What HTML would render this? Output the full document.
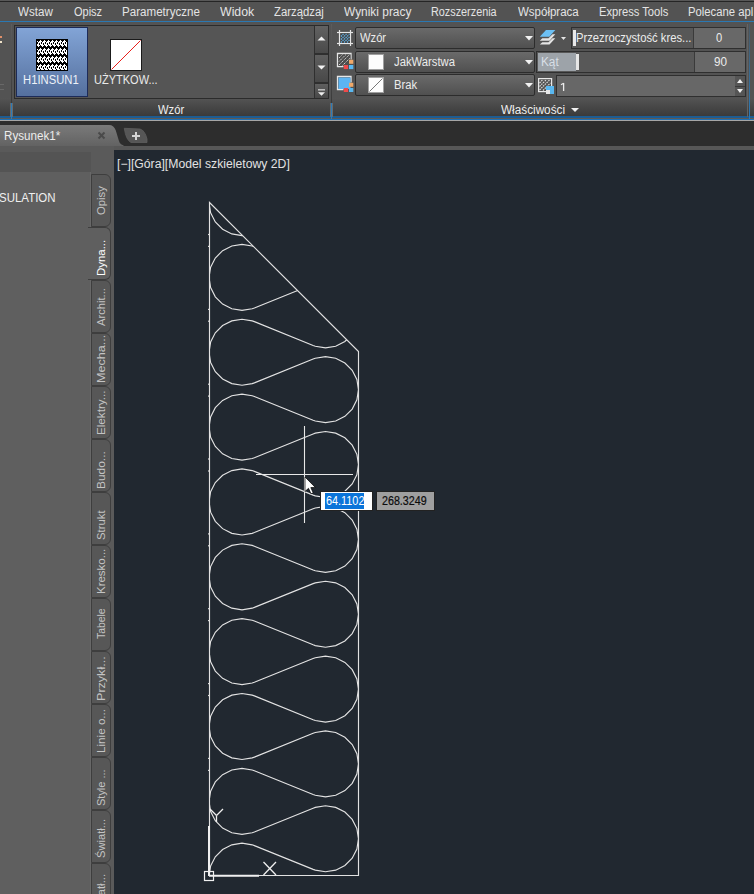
<!DOCTYPE html>
<html><head><meta charset="utf-8">
<style>
*{box-sizing:border-box}
html,body{margin:0;padding:0}
body{width:754px;height:894px;overflow:hidden;position:relative;background:#2d2d2d;font-family:"Liberation Sans",sans-serif;}
.a{position:absolute}
.t{position:absolute;white-space:nowrap;line-height:12px;font-size:12px;transform-origin:0 0}
.vt{position:absolute;white-space:nowrap;font-size:11.5px;line-height:11.5px;transform-origin:0 0;transform:rotate(-90deg)}
.combo{position:absolute;background:linear-gradient(#6a6a6a,#505050);border:1px solid #2c2c2c;border-radius:2px}
</style></head><body>
<!-- menu bar -->
<div class="a" style="left:0;top:0;width:754px;height:1px;background:#585858"></div>
<div class="a" style="left:0;top:1px;width:754px;height:1px;background:#252525"></div>
<div class="a" style="left:0;top:2px;width:754px;height:19px;background:#535353"></div>
<div class="a" style="left:0;top:21px;width:754px;height:1px;background:#2a78b2"></div>

<!-- ribbon -->
<div class="a" style="left:0;top:22px;width:754px;height:77px;background:#535353"></div>
<div class="a" style="left:0;top:98px;width:754px;height:18px;background:linear-gradient(#545454,#3a3a3a)"></div>
<div class="a" style="left:0;top:116px;width:754px;height:2px;background:#1d5c92"></div>
<div class="a" style="left:0;top:118px;width:754px;height:1px;background:#5e5954"></div>
<div class="a" style="left:0;top:119px;width:754px;height:1px;background:#1e70b4"></div>
<div class="a" style="left:0;top:120px;width:754px;height:1px;background:#a6a6a6"></div>
<!-- separators -->
<div class="a" style="left:11px;top:24px;width:1px;height:79px;background:linear-gradient(#5c5c5c,#3a3a3a)"></div>
<div class="a" style="left:11px;top:103px;width:1px;height:16px;background:#2a7ab8"></div>
<div class="a" style="left:10px;top:103px;width:1px;height:14px;background:#6a6a6a"></div>
<div class="a" style="left:12px;top:103px;width:1px;height:14px;background:#6a6a6a"></div>
<div class="a" style="left:331px;top:24px;width:1px;height:79px;background:linear-gradient(#5c5c5c,#3a3a3a)"></div>
<div class="a" style="left:331px;top:103px;width:1px;height:16px;background:#2a7ab8"></div>
<div class="a" style="left:330px;top:103px;width:1px;height:14px;background:#6a6a6a"></div>
<div class="a" style="left:332px;top:103px;width:1px;height:14px;background:#6a6a6a"></div>
<div class="a" style="left:749px;top:24px;width:1px;height:95px;background:linear-gradient(#4a5a66,#2a7ab8)"></div>
<div class="a" style="left:747px;top:24px;width:1px;height:93px;background:#646464"></div>
<div class="a" style="left:0;top:36px;width:1.5px;height:2px;background:#e0906a"></div><div class="a" style="left:0;top:41px;width:1.5px;height:1.5px;background:#efe2c8"></div>
<div class="a" style="left:0;top:84px;width:3.5px;height:6px;border-top:1px solid #686868;border-bottom:1px solid #686868"></div>

<!-- gallery -->
<div class="a" style="left:14px;top:25px;width:315px;height:74px;background:#555555;border:1px solid #2b2b2b"></div>
<div class="a" style="left:16px;top:27px;width:72px;height:70px;background:linear-gradient(#82a4d6,#55709e);border:1px solid #1d2b58"></div>
<svg class="a" style="left:36px;top:39px" width="32" height="32">
<rect width="32" height="32" fill="#000"/>
<defs><pattern id="ht" x="1" y="1" width="4" height="8" patternUnits="userSpaceOnUse"><g fill="#fff"><rect x="3" y="0" width="1" height="1"/><rect x="0" y="1" width="1" height="1"/><rect x="2" y="1" width="1" height="1"/><rect x="3" y="1" width="1" height="1"/><rect x="1" y="2" width="1" height="1"/><rect x="2" y="2" width="1" height="1"/><rect x="3" y="2" width="1" height="1"/><rect x="1" y="3" width="1" height="1"/><rect x="3" y="3" width="1" height="1"/><rect x="0" y="4" width="1" height="1"/><rect x="1" y="4" width="1" height="1"/><rect x="3" y="4" width="1" height="1"/><rect x="0" y="5" width="1" height="1"/><rect x="1" y="5" width="1" height="1"/><rect x="2" y="5" width="1" height="1"/><rect x="1" y="6" width="1" height="1"/></g></pattern></defs>
<rect x="1" y="1" width="30" height="30" fill="url(#ht)"/>
</svg>
<div class="a" style="left:110px;top:39px;width:32px;height:32px;background:#fff;border:1px solid #1a1a1a"></div>
<svg class="a" style="left:110px;top:39px" width="32" height="32"><line x1="1.5" y1="30.5" x2="30.5" y2="1.5" stroke="#e8201c" stroke-width="1"/></svg>
<!-- scroll buttons -->
<div class="a" style="left:314px;top:26px;width:14px;height:72px;background:#2f2f2f"></div>
<div class="a" style="left:315px;top:26px;width:13px;height:27px;background:linear-gradient(#626262,#4a4a4a)"></div>
<div class="a" style="left:315px;top:55px;width:13px;height:27px;background:linear-gradient(#5f5f5f,#484848)"></div>
<div class="a" style="left:315px;top:84px;width:13px;height:14px;background:linear-gradient(#5f5f5f,#484848)"></div>
<svg class="a" style="left:315px;top:26px" width="13" height="72">
<polygon points="2.5,14.5 10.5,14.5 6.5,10.5" fill="#f2f2f2"/>
<polygon points="2.5,39.5 10.5,39.5 6.5,43.5" fill="#f2f2f2"/>
<rect x="3" y="63" width="7" height="1.6" fill="#b8b8b8"/>
<polygon points="3,66.3 10,66.3 6.5,69.8" fill="#eeeeee"/>
</svg>

<!-- properties panel icons -->
<svg class="a" style="left:334px;top:26px" width="24" height="72">
<g stroke="#e6e6e6" stroke-width="1.2" fill="none">
<line x1="3" y1="6.5" x2="19" y2="6.5"/><line x1="3" y1="17.5" x2="19" y2="17.5"/>
<line x1="5.5" y1="4" x2="5.5" y2="20"/><line x1="16.5" y1="4" x2="16.5" y2="20"/>
</g>
<rect x="6.5" y="7.5" width="9.5" height="9.5" fill="#474747"/>
<g stroke="#5fb8f4" stroke-width="1.1" stroke-dasharray="1.4 0.8"><line x1="7" y1="10.5" x2="9.5" y2="8"/><line x1="7" y1="13.5" x2="12.5" y2="8"/><line x1="7" y1="16.5" x2="15.5" y2="8"/><line x1="10" y1="16.5" x2="15.5" y2="11"/><line x1="13" y1="16.5" x2="15.5" y2="14"/></g>
<!-- row2 -->
<path d="M17 33.5 V27.5 H3.5 V40.5 H9.5" stroke="#e6e6e6" stroke-width="1.3" fill="none"/>
<rect x="4.5" y="28.5" width="12" height="11.5" fill="#4e4e4e"/>
<g stroke="#d8d8d8" stroke-width="1" stroke-dasharray="1.3 0.9"><line x1="5" y1="32" x2="8.5" y2="28.5"/><line x1="5" y1="35.5" x2="12" y2="28.5"/><line x1="5" y1="39" x2="15.5" y2="28.5"/><line x1="8.5" y1="39.5" x2="16" y2="32"/></g>
<rect x="15" y="33.8" width="4.3" height="4" fill="#f0a868"/>
<rect x="9.8" y="39" width="4.3" height="4.1" fill="#ee4a4a"/>
<rect x="15" y="39" width="4.3" height="4.1" fill="#5ab8f0"/>
<!-- row3 -->
<path d="M17 56.5 V50.5 H3.5 V63.5 H9.5" stroke="#e6e6e6" stroke-width="1.3" fill="none"/>
<rect x="4.5" y="51.5" width="12" height="11.5" fill="#5cb4f2"/>
<rect x="15" y="56.8" width="4.3" height="4" fill="#f0a868"/>
<rect x="9.8" y="62" width="4.3" height="4" fill="#ee4a4a"/>
<rect x="15" y="62" width="4.3" height="4" fill="#5ab8f0"/>
</svg>
<div class="combo" style="left:355px;top:27px;width:180px;height:22px"></div>
<div class="combo" style="left:355px;top:51px;width:180px;height:22px"></div>
<div class="combo" style="left:355px;top:74px;width:180px;height:22px"></div>
<svg class="a" style="left:520px;top:26px" width="60" height="72">
<polygon points="5,10 13,10 9,14.5" fill="#f2f2f2"/>
<polygon points="5,34 13,34 9,38.5" fill="#f2f2f2"/>
<polygon points="5,57 13,57 9,61.5" fill="#f2f2f2"/>
<!-- layers icon -->
<polygon points="19.8,10.8 29.3,10.8 35.3,4 26,4" fill="#6cc0f4"/>
<polygon points="19.8,14.8 29.5,14.8 35.3,8.3 32.5,8.3 28.5,12.3 22.3,12.3" fill="#e4e4e4"/>
<polygon points="19.8,18.6 29.5,18.6 35.3,12.2 32.5,12.2 28.5,16.2 22.3,16.2" fill="#e4e4e4"/>
<polygon points="41,11 46,11 43.5,14" fill="#e6e6e6"/>
</svg>
<div class="a" style="left:368px;top:54px;width:16px;height:16px;background:#fdfdfd;border:1px solid #a0a0a0"></div>
<div class="a" style="left:368px;top:77px;width:16px;height:16px;background:#fdfdfd;border:1px solid #a0a0a0"></div>
<svg class="a" style="left:368px;top:77px" width="16" height="16"><line x1="1.5" y1="14.5" x2="14.5" y2="1.5" stroke="#777" stroke-width="1"/></svg>

<div class="a" style="left:571px;top:27px;width:175px;height:22px;background:#575757;border:1px solid #2f2f2f"></div>
<div class="a" style="left:693px;top:28px;width:52px;height:20px;background:#686868;border-left:1px solid #3a3a3a"></div>
<div class="a" style="left:573px;top:30px;width:3px;height:16px;background:#e8e8e8"></div>
<div class="a" style="left:536px;top:51px;width:210px;height:22px;background:#585858;border:1px solid #2f2f2f"></div>
<div class="a" style="left:538px;top:53px;width:38px;height:18px;background:#9da3a9"></div>
<div class="a" style="left:576px;top:54px;width:3px;height:16px;background:#e6e6e6"></div>
<div class="a" style="left:694px;top:52px;width:51px;height:20px;background:#686868;border-left:1px solid #3a3a3a"></div>
<svg class="a" style="left:537px;top:77px" width="18" height="18">
<rect x="1.6" y="1.6" width="13" height="13" fill="#555" stroke="#e8e8e8" stroke-width="1.2"/>
<g stroke="#e2e2e2" stroke-width="1.1" stroke-dasharray="1.6 0.9"><line x1="2.5" y1="6" x2="6" y2="2.5"/><line x1="2.5" y1="9.5" x2="9.5" y2="2.5"/><line x1="2.5" y1="13" x2="13" y2="2.5"/><line x1="6" y1="13.5" x2="13.5" y2="6"/></g>
<rect x="9" y="9" width="8" height="8" fill="#5ab8f0"/>
<rect x="9" y="13" width="4" height="4" fill="#e8e8e8"/>
</svg>
<div class="a" style="left:556px;top:75px;width:190px;height:22px;background:#676767;border:1px solid #2f2f2f"></div>
<div class="a" style="left:735px;top:76px;width:10px;height:20px;background:#3a3a3a"></div>
<div class="a" style="left:735px;top:76px;width:10px;height:9.5px;background:#555"></div>
<div class="a" style="left:735px;top:86.5px;width:10px;height:9.5px;background:#555"></div>
<svg class="a" style="left:735px;top:76px" width="10" height="20">
<polygon points="2,7 8,7 5,3" fill="#f0f0f0"/><polygon points="2,13 8,13 5,17" fill="#f0f0f0"/>
</svg>
<svg class="a" style="left:565px;top:104px" width="16" height="10"><polygon points="6,4 14,4 10,8" fill="#f0f0f0"/></svg>

<!-- tab bar -->
<div class="a" style="left:0;top:121px;width:754px;height:26px;background:#2d2d2d"></div>
<svg class="a" style="left:0;top:121px" width="160" height="29">
<defs><linearGradient id="tg" x1="0" y1="0" x2="0" y2="1"><stop offset="0" stop-color="#7a7a7a"/><stop offset="1" stop-color="#5e5e5e"/></linearGradient></defs>
<path d="M0 3.9 H109 Q114 3.9 115.8 9.5 L118.8 19.5 Q120 23.8 123.5 24.2 V29 H0 Z" fill="url(#tg)"/>
<path d="M124.3 7.3 L140 8 Q145 9.5 147 18 L147 21.5 L131 21.5 Q126 19 124.3 7.3 Z" fill="#565656" stroke="#5e5e5e" stroke-width="0.8"/>
</svg>
<svg class="a" style="left:97px;top:131px" width="10" height="10"><g stroke="#4a4a4a" stroke-width="1.9"><line x1="1.5" y1="1.5" x2="7.5" y2="7.5"/><line x1="7.5" y1="1.5" x2="1.5" y2="7.5"/></g></svg>
<svg class="a" style="left:129px;top:129px" width="14" height="14"><g stroke="#d4d4d4" stroke-width="2"><line x1="7" y1="3" x2="7" y2="11"/><line x1="3" y1="7" x2="11" y2="7"/></g></svg>

<!-- palette -->
<div class="a" style="left:0;top:146px;width:754px;height:4px;background:#575757"></div>
<div class="a" style="left:0;top:146px;width:114px;height:748px;background:#5a5a5a"></div>
<div class="a" style="left:0;top:152px;width:91px;height:20px;background:#545454"></div>
<div class="a" style="left:0;top:172px;width:90px;height:722px;background:#5f5f5f"></div>
<div class="a" style="left:90px;top:172px;width:1px;height:722px;background:#686868"></div>
<div class="a" style="left:91px;top:174px;width:20px;height:53px;background:#575757;border:1px solid #3e3e3e;border-radius:0 6px 6px 0"></div>
<div class="a" style="left:88px;top:227px;width:23px;height:53px;background:#5f5f5f;border:1px solid #3e3e3e;border-left:none;border-radius:0 6px 6px 0"></div>
<div class="a" style="left:91px;top:280px;width:20px;height:53px;background:#575757;border:1px solid #3e3e3e;border-radius:0 6px 6px 0"></div>
<div class="a" style="left:91px;top:333px;width:20px;height:53px;background:#575757;border:1px solid #3e3e3e;border-radius:0 6px 6px 0"></div>
<div class="a" style="left:91px;top:386px;width:20px;height:53px;background:#575757;border:1px solid #3e3e3e;border-radius:0 6px 6px 0"></div>
<div class="a" style="left:91px;top:439px;width:20px;height:53px;background:#575757;border:1px solid #3e3e3e;border-radius:0 6px 6px 0"></div>
<div class="a" style="left:91px;top:492px;width:20px;height:53px;background:#575757;border:1px solid #3e3e3e;border-radius:0 6px 6px 0"></div>
<div class="a" style="left:91px;top:545px;width:20px;height:53px;background:#575757;border:1px solid #3e3e3e;border-radius:0 6px 6px 0"></div>
<div class="a" style="left:91px;top:598px;width:20px;height:53px;background:#575757;border:1px solid #3e3e3e;border-radius:0 6px 6px 0"></div>
<div class="a" style="left:91px;top:651px;width:20px;height:53px;background:#575757;border:1px solid #3e3e3e;border-radius:0 6px 6px 0"></div>
<div class="a" style="left:91px;top:704px;width:20px;height:53px;background:#575757;border:1px solid #3e3e3e;border-radius:0 6px 6px 0"></div>
<div class="a" style="left:91px;top:757px;width:20px;height:53px;background:#575757;border:1px solid #3e3e3e;border-radius:0 6px 6px 0"></div>
<div class="a" style="left:91px;top:810px;width:20px;height:53px;background:#575757;border:1px solid #3e3e3e;border-radius:0 6px 6px 0"></div>
<div class="a" style="left:91px;top:863px;width:20px;height:53px;background:#575757;border:1px solid #3e3e3e;border-radius:0 6px 6px 0"></div>
<div class="vt" style="left:96.3px;top:214.7px;color:#c4c4c4;transform:rotate(-90deg) scaleX(0.983)">Opisy</div>
<div class="vt" style="left:96.3px;top:276.4px;color:#ffffff;transform:rotate(-90deg) scaleX(0.994)">Dyna...</div>
<div class="vt" style="left:96.3px;top:325.6px;color:#c4c4c4;transform:rotate(-90deg) scaleX(0.971)">Archit...</div>
<div class="vt" style="left:96.3px;top:382.5px;color:#c4c4c4;transform:rotate(-90deg) scaleX(1.093)">Mecha...</div>
<div class="vt" style="left:96.3px;top:435.1px;color:#c4c4c4;transform:rotate(-90deg) scaleX(1.014)">Elektry...</div>
<div class="vt" style="left:96.3px;top:489.0px;color:#c4c4c4;transform:rotate(-90deg) scaleX(1.037)">Budo...</div>
<div class="vt" style="left:96.3px;top:539.5px;color:#c4c4c4;transform:rotate(-90deg) scaleX(0.983)">Strukt</div>
<div class="vt" style="left:96.3px;top:594.4px;color:#c4c4c4;transform:rotate(-90deg) scaleX(0.998)">Kresko...</div>
<div class="vt" style="left:96.3px;top:638.6px;color:#c4c4c4;transform:rotate(-90deg) scaleX(0.903)">Tabele</div>
<div class="vt" style="left:96.3px;top:700.5px;color:#c4c4c4;transform:rotate(-90deg) scaleX(1.092)">Przykł...</div>
<div class="vt" style="left:96.3px;top:753.1px;color:#c4c4c4;transform:rotate(-90deg) scaleX(1.014)">Linie o...</div>
<div class="vt" style="left:96.3px;top:806.0px;color:#c4c4c4;transform:rotate(-90deg) scaleX(0.955)">Style ...</div>
<div class="vt" style="left:96.3px;top:857.8px;color:#c4c4c4;transform:rotate(-90deg) scaleX(0.970)">Światł...</div>
<div class="vt" style="left:96.3px;top:913.5px;color:#c4c4c4;transform:rotate(-90deg) scaleX(1.000)">Światł...</div>

<!-- viewport -->
<div class="a" style="left:114px;top:150px;width:640px;height:744px;background:#212830"></div>
<svg class="a" style="left:0;top:0" width="754" height="894">
<defs><clipPath id="cp"><polygon points="209.5,202.5 358.5,351.5 358.5,875.5 209.5,875.5"/></clipPath></defs>
<g fill="none" stroke="#e2e2e2" stroke-width="1.15">
<path clip-path="url(#cp)" d="M254.37 171.96 L252.20 171.17 L242.00 169.55 L231.80 171.17 L222.60 175.85 L215.30 183.15 L210.62 192.35 L209.00 202.55 L210.62 212.75 L215.30 221.95 L222.60 229.25 L231.80 233.93 L242.00 235.55 L252.20 233.93 L254.37 233.14 L313.13 209.38 L315.30 208.59 L325.50 206.98 L335.70 208.59 L344.90 213.28 L352.20 220.58 L356.88 229.78 L358.50 239.98 L356.88 250.17 L352.20 259.37 L344.90 266.67 L335.70 271.36 L325.50 272.98 L315.30 271.36 L313.13 270.57 L254.37 246.81 L252.20 246.02 L242.00 244.40 L231.80 246.02 L222.60 250.70 L215.30 258.00 L210.62 267.20 L209.00 277.40 L210.62 287.60 L215.30 296.80 L222.60 304.10 L231.80 308.78 L242.00 310.40 L252.20 308.78 L254.37 307.99 L313.13 284.23 L315.30 283.44 L325.50 281.83 L335.70 283.44 L344.90 288.13 L352.20 295.43 L356.88 304.63 L358.50 314.83 L356.88 325.02 L352.20 334.22 L344.90 341.52 L335.70 346.21 L325.50 347.83 L315.30 346.21 L313.13 345.42 L254.37 321.66 L252.20 320.87 L242.00 319.25 L231.80 320.87 L222.60 325.55 L215.30 332.85 L210.62 342.05 L209.00 352.25 L210.62 362.45 L215.30 371.65 L222.60 378.95 L231.80 383.63 L242.00 385.25 L252.20 383.63 L254.37 382.84 L313.13 359.08 L315.30 358.29 L325.50 356.68 L335.70 358.29 L344.90 362.98 L352.20 370.28 L356.88 379.48 L358.50 389.68 L356.88 399.87 L352.20 409.07 L344.90 416.37 L335.70 421.06 L325.50 422.68 L315.30 421.06 L313.13 420.27 L254.37 396.51 L252.20 395.72 L242.00 394.10 L231.80 395.72 L222.60 400.40 L215.30 407.70 L210.62 416.90 L209.00 427.10 L210.62 437.30 L215.30 446.50 L222.60 453.80 L231.80 458.48 L242.00 460.10 L252.20 458.48 L254.37 457.69 L313.13 433.93 L315.30 433.14 L325.50 431.52 L335.70 433.14 L344.90 437.83 L352.20 445.13 L356.88 454.33 L358.50 464.52 L356.88 474.72 L352.20 483.92 L344.90 491.22 L335.70 495.91 L325.50 497.52 L315.30 495.91 L313.13 495.12 L254.37 471.36 L252.20 470.57 L242.00 468.95 L231.80 470.57 L222.60 475.25 L215.30 482.55 L210.62 491.75 L209.00 501.95 L210.62 512.15 L215.30 521.35 L222.60 528.65 L231.80 533.33 L242.00 534.95 L252.20 533.33 L254.37 532.54 L313.13 508.78 L315.30 507.99 L325.50 506.38 L335.70 507.99 L344.90 512.68 L352.20 519.98 L356.88 529.18 L358.50 539.38 L356.88 549.57 L352.20 558.77 L344.90 566.07 L335.70 570.76 L325.50 572.38 L315.30 570.76 L313.13 569.97 L254.37 546.21 L252.20 545.42 L242.00 543.80 L231.80 545.42 L222.60 550.10 L215.30 557.40 L210.62 566.60 L209.00 576.80 L210.62 587.00 L215.30 596.20 L222.60 603.50 L231.80 608.18 L242.00 609.80 L252.20 608.18 L254.37 607.39 L313.13 583.63 L315.30 582.84 L325.50 581.23 L335.70 582.84 L344.90 587.53 L352.20 594.83 L356.88 604.03 L358.50 614.23 L356.88 624.42 L352.20 633.62 L344.90 640.92 L335.70 645.61 L325.50 647.23 L315.30 645.61 L313.13 644.82 L254.37 621.06 L252.20 620.27 L242.00 618.65 L231.80 620.27 L222.60 624.95 L215.30 632.25 L210.62 641.45 L209.00 651.65 L210.62 661.85 L215.30 671.05 L222.60 678.35 L231.80 683.03 L242.00 684.65 L252.20 683.03 L254.37 682.24 L313.13 658.48 L315.30 657.69 L325.50 656.08 L335.70 657.69 L344.90 662.38 L352.20 669.68 L356.88 678.88 L358.50 689.08 L356.88 699.27 L352.20 708.47 L344.90 715.77 L335.70 720.46 L325.50 722.08 L315.30 720.46 L313.13 719.67 L254.37 695.91 L252.20 695.12 L242.00 693.50 L231.80 695.12 L222.60 699.80 L215.30 707.10 L210.62 716.30 L209.00 726.50 L210.62 736.70 L215.30 745.90 L222.60 753.20 L231.80 757.88 L242.00 759.50 L252.20 757.88 L254.37 757.09 L313.13 733.33 L315.30 732.54 L325.50 730.92 L335.70 732.54 L344.90 737.23 L352.20 744.53 L356.88 753.73 L358.50 763.92 L356.88 774.12 L352.20 783.32 L344.90 790.62 L335.70 795.31 L325.50 796.92 L315.30 795.31 L313.13 794.52 L254.37 770.76 L252.20 769.97 L242.00 768.35 L231.80 769.97 L222.60 774.65 L215.30 781.95 L210.62 791.15 L209.00 801.35 L210.62 811.55 L215.30 820.75 L222.60 828.05 L231.80 832.73 L242.00 834.35 L252.20 832.73 L254.37 831.94 L313.13 808.18 L315.30 807.39 L325.50 805.77 L335.70 807.39 L344.90 812.08 L352.20 819.38 L356.88 828.58 L358.50 838.77 L356.88 848.97 L352.20 858.17 L344.90 865.47 L335.70 870.16 L325.50 871.77 L315.30 870.16 L313.13 869.37 L254.37 845.61 L252.20 844.82 L242.00 843.20 L231.80 844.82 L222.60 849.50 L215.30 856.80 L210.62 866.00 L209.00 876.20 L210.62 886.40 L215.30 895.60 L222.60 902.90 L231.80 907.58 L242.00 909.20 L252.20 907.58 L254.37 906.79 L313.13 883.03 L315.30 882.24 L325.50 880.62 L335.70 882.24 L344.90 886.93 L352.20 894.23 L356.88 903.43 L358.50 913.62 L356.88 923.82 L352.20 933.02 L344.90 940.32 L335.70 945.01 L325.50 946.62 L315.30 945.01 L313.13 944.22"/>
<polygon points="209.5,202.5 358.5,351.5 358.5,875.5 209.5,875.5"/>
</g>
<rect x="208" y="233.9" width="1" height="1.2" fill="#d8d8d8"/><rect x="208" y="245.8" width="1" height="1.2" fill="#d8d8d8"/><rect x="208" y="308.8" width="1" height="1.2" fill="#d8d8d8"/><rect x="208" y="320.6" width="1" height="1.2" fill="#d8d8d8"/><rect x="208" y="383.6" width="1" height="1.2" fill="#d8d8d8"/><rect x="208" y="395.5" width="1" height="1.2" fill="#d8d8d8"/><rect x="208" y="458.4" width="1" height="1.2" fill="#d8d8d8"/><rect x="208" y="470.4" width="1" height="1.2" fill="#d8d8d8"/><rect x="208" y="533.3" width="1" height="1.2" fill="#d8d8d8"/><rect x="208" y="545.2" width="1" height="1.2" fill="#d8d8d8"/><rect x="208" y="608.1" width="1" height="1.2" fill="#d8d8d8"/><rect x="208" y="620.0" width="1" height="1.2" fill="#d8d8d8"/><rect x="208" y="683.0" width="1" height="1.2" fill="#d8d8d8"/><rect x="208" y="694.9" width="1" height="1.2" fill="#d8d8d8"/><rect x="208" y="757.8" width="1" height="1.2" fill="#d8d8d8"/><rect x="208" y="769.8" width="1" height="1.2" fill="#d8d8d8"/><rect x="208" y="832.7" width="1" height="1.2" fill="#d8d8d8"/><rect x="208" y="844.6" width="1" height="1.2" fill="#d8d8d8"/>
<!-- UCS icon -->
<g stroke="#f0f0f0" fill="none">
<line x1="209" y1="826" x2="209" y2="876" stroke-width="2"/>
<line x1="209" y1="875.8" x2="259" y2="875.8" stroke-width="2"/>
<rect x="204.5" y="871.5" width="9" height="9" stroke-width="1.2"/>
<g stroke-width="1.3"><line x1="263.5" y1="862" x2="276" y2="875"/><line x1="276" y1="862" x2="263.5" y2="875"/>
<line x1="210" y1="809" x2="216.5" y2="815.5"/><line x1="223" y1="809" x2="216.5" y2="815.5"/><line x1="216.5" y1="815.5" x2="216.5" y2="822"/></g>
</g>
<!-- crosshair -->
<g stroke="#e8e8e8" stroke-width="1.1">
<line x1="304.5" y1="426" x2="304.5" y2="523"/>
<line x1="256" y1="474.5" x2="353" y2="474.5"/>
</g>
<path d="M305 477 L305 491.5 L308.5 488.3 L311 493.8 L313.2 492.8 L310.8 487.6 L315.3 487.4 Z" fill="#fff" stroke="#000" stroke-width="0.7"/>
</svg>
<div class="a" style="left:320px;top:491px;width:53px;height:20px;background:#fff;border:1px solid #222"></div>
<div class="a" style="left:325px;top:493px;width:39px;height:16px;background:#0a74d9"></div>
<div class="a" style="left:376px;top:491px;width:59px;height:20px;background:#9f9f9f;border:1px solid #222"></div>
<svg class="a" style="left:558px;top:80px" width="10" height="14"><path d="M5.6 3 V11" stroke="#ececec" stroke-width="1.3"/><path d="M5.6 3.2 L3 4.8" stroke="#ececec" stroke-width="1.1"/></svg>
<div class="t" style="left:18.20px;top:6.0px;color:#e4e4e4;transform:scaleX(0.9667)">Wstaw</div>
<div class="t" style="left:73.60px;top:6.0px;color:#e4e4e4;transform:scaleX(0.9161)">Opisz</div>
<div class="t" style="left:121.73px;top:6.0px;color:#e4e4e4;transform:scaleX(0.9662)">Parametryczne</div>
<div class="t" style="left:220.10px;top:6.0px;color:#e4e4e4;transform:scaleX(1.0273)">Widok</div>
<div class="t" style="left:273.90px;top:6.0px;color:#e4e4e4;transform:scaleX(0.9442)">Zarządzaj</div>
<div class="t" style="left:343.50px;top:6.0px;color:#e4e4e4;transform:scaleX(0.9926)">Wyniki pracy</div>
<div class="t" style="left:430.80px;top:6.0px;color:#e4e4e4;transform:scaleX(0.9028)">Rozszerzenia</div>
<div class="t" style="left:517.50px;top:6.0px;color:#e4e4e4;transform:scaleX(0.9578)">Współpraca</div>
<div class="t" style="left:598.77px;top:6.0px;color:#e4e4e4;transform:scaleX(0.9315)">Express Tools</div>
<div class="t" style="left:687.66px;top:6.0px;color:#e4e4e4;transform:scaleX(0.9412)">Polecane apl</div>
<div class="t" style="left:23.46px;top:74.2px;color:#eef2f8;transform:scaleX(0.9379)">H1INSUN1</div>
<div class="t" style="left:94.08px;top:74.2px;color:#eaeaea;transform:scaleX(0.9176)">UŻYTKOW...</div>
<div class="t" style="left:158.30px;top:104.0px;color:#efefef;transform:scaleX(0.9357)">Wzór</div>
<div class="t" style="left:501.30px;top:104.0px;color:#efefef;transform:scaleX(0.9800)">Właściwości</div>
<div class="t" style="left:359.50px;top:32.2px;color:#ececec;transform:scaleX(0.9321)">Wzór</div>
<div class="t" style="left:394.00px;top:56.0px;color:#ececec;transform:scaleX(0.9385)">JakWarstwa</div>
<div class="t" style="left:393.56px;top:79.0px;color:#ececec;transform:scaleX(0.9375)">Brak</div>
<div class="t" style="left:576.46px;top:32.0px;color:#ececec;transform:scaleX(0.9352)">Przezroczystość kres...</div>
<div class="t" style="left:716.10px;top:32.0px;color:#ececec;transform:scaleX(0.9286)">0</div>
<div class="t" style="left:714.20px;top:56.0px;color:#ececec;transform:scaleX(0.9769)">90</div>
<div class="t" style="left:541.32px;top:56.0px;color:#d8dfe6;transform:scaleX(0.9824)">Kąt</div>
<div class="t" style="left:4.23px;top:130.0px;color:#ececec;transform:scaleX(0.9702)">Rysunek1*</div>
<div class="t" style="left:-0.96px;top:191.7px;color:#f0f0f0;transform:scaleX(0.9569)">SULATION</div>
<div class="t" style="left:117.18px;top:158.3px;color:#e2e2e2;transform:scaleX(1.0179)">[−][Góra][Model szkieletowy 2D]</div>
<div class="t" style="left:326.00px;top:495.0px;color:#ffffff;transform:scaleX(0.9048)">64.1102</div>
<div class="t" style="left:381.50px;top:495.0px;color:#0c0c0c;-webkit-text-stroke:0.2px #0c0c0c;transform:scaleX(0.8920)">268.3249</div>
</body></html>
